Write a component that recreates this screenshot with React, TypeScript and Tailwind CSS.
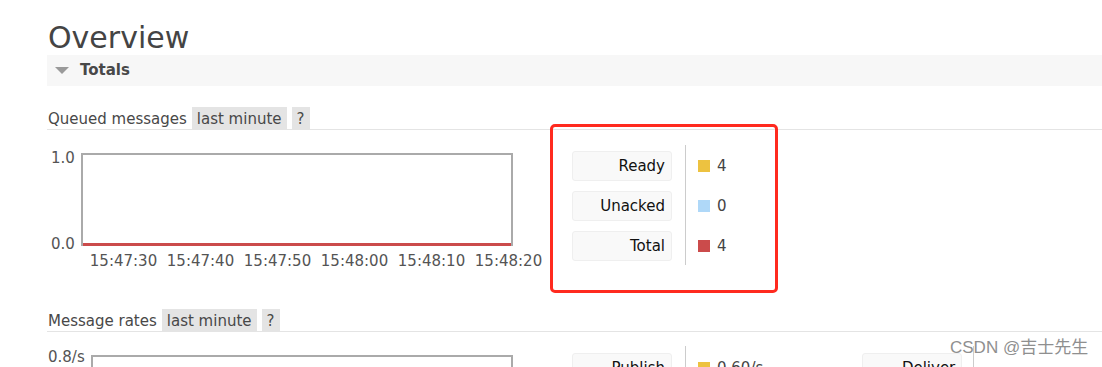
import React from "react";

const font = { fontFamily: '"DejaVu Sans", Verdana, sans-serif' };

const SectionHeading = ({ title }: { title: string }) => (
  <div className="flex items-end gap-[5px] border-b border-[#e4e4e4] text-[15px] leading-[20px] text-[#484848]">
    <span className="pl-[1px]">{title}</span>
    <span className="bg-[#e4e4e4] px-[5px] pt-[2px]">last minute</span>
    <span className="bg-[#e4e4e4] px-[5px] pt-[2px]">?</span>
  </div>
);

const LegendRow = ({ label, color, value }: { label: string; color?: string; value?: string }) => (
  <div className="flex items-center h-[30px]">
    <div className="w-[100px] h-[30px] flex items-center justify-end pr-[6px] bg-[#f9f9f9] border border-[#efefef] rounded-[3px] text-[15px] text-[#111]">
      {label}
    </div>
    <div className="w-[26px]" />
    {color && <div className={`w-[12px] h-[12px] ${color}`} />}
    {value && <span className="ml-[7px] text-[15px] text-[#444]">{value}</span>}
  </div>
);

const times = ["15:47:30", "15:47:40", "15:47:50", "15:48:00", "15:48:10", "15:48:20"];

export default function App() {
  return (
    <div className="relative w-[1102px] h-[367px] overflow-hidden bg-white" style={font}>
      <div className="pl-[47px] pt-[20px]">
        <h1 className="pl-[1px] text-[30px] leading-[36px] text-[#444]">Overview</h1>
        <div className="-mt-[1px] h-[31px] bg-[#f7f7f7] flex items-center">
          <div className="ml-[8px] w-0 h-0 border-l-[7px] border-r-[7px] border-t-[7px] border-l-transparent border-r-transparent border-t-[#9a9a9a]" />
          <span className="ml-[11px] text-[15px] font-bold text-[#484848]">Totals</span>
        </div>

        {/* Queued messages */}
        <div className="mt-[21px]">
          <SectionHeading title="Queued messages" />
          <div className="flex">
            <div className="w-[500px] pt-[23px]">
              <div className="flex w-[466px]">
                <div className="flex flex-col justify-between h-[94px] pl-[4px] pr-[6px] text-[15px] leading-[15px] text-[#545454]">
                  <span className="-mt-[2px]">1.0</span>
                  <span className="-mb-[5px]">0.0</span>
                </div>
                <div className="relative flex-1 h-[93px] border-2 border-[#aaaaaa] border-b-0">
                  <div className="absolute left-0 right-0 bottom-0 h-[3px] bg-[#cb4b4b]" />
                </div>
              </div>
              <div className="flex ml-[38px] mt-[4px] text-[15px] leading-[20px] text-[#545454]">
                {times.map((t) => (
                  <span key={t} className="w-[77.5px] text-center">{t}</span>
                ))}
              </div>
            </div>
            <div className="ml-[25px] pt-[21px] flex flex-col gap-[10px]">
              <LegendRow label="Ready" color="bg-[#edc240]" value="4" />
              <LegendRow label="Unacked" color="bg-[#afd8f8]" value="0" />
              <LegendRow label="Total" color="bg-[#cb4b4b]" value="4" />
            </div>
          </div>
        </div>

        {/* Message rates */}
        <div className="mt-[38px]">
          <SectionHeading title="Message rates" />
          <div className="flex">
            <div className="w-[500px] pt-[23px]">
              <div className="flex w-[466px]">
                <div className="pl-[1px] pr-[6px] text-[15px] leading-[15px] text-[#545454]">
                  <span className="block -mt-[5px]">0.8/s</span>
                </div>
                <div className="flex-1 h-[93px] border-2 border-[#aaaaaa]" />
              </div>
            </div>
            <div className="ml-[25px] pt-[21px] flex items-start">
              <LegendRow label="Publish" color="bg-[#edc240]" value="0.60/s" />
              <div className="ml-[99px]">
                <LegendRow label="Deliver" />
              </div>
            </div>
          </div>
        </div>
      </div>

      {/* legend dividers */}
      <div className="absolute left-[685px] top-[145px] w-px h-[120px] bg-[#cccccc]" />
      <div className="absolute left-[685px] top-[346px] w-px h-[30px] bg-[#cccccc]" />
      <div className="absolute left-[973px] top-[346px] w-px h-[30px] bg-[#cccccc]" />

      {/* annotation */}
      <div className="absolute left-[550px] top-[124px] w-[228px] h-[169px] border-[3px] border-[#ff2a1f] rounded-[5px]" />

      {/* watermark */}
      <div
        className="absolute left-[950px] top-[337px] text-[17px] leading-[22px] text-[#8f8f8f]"
        style={{ fontFamily: '"Liberation Sans", "Noto Sans CJK SC", sans-serif' }}
      >
        CSDN @吉士先生
      </div>
    </div>
  );
}
